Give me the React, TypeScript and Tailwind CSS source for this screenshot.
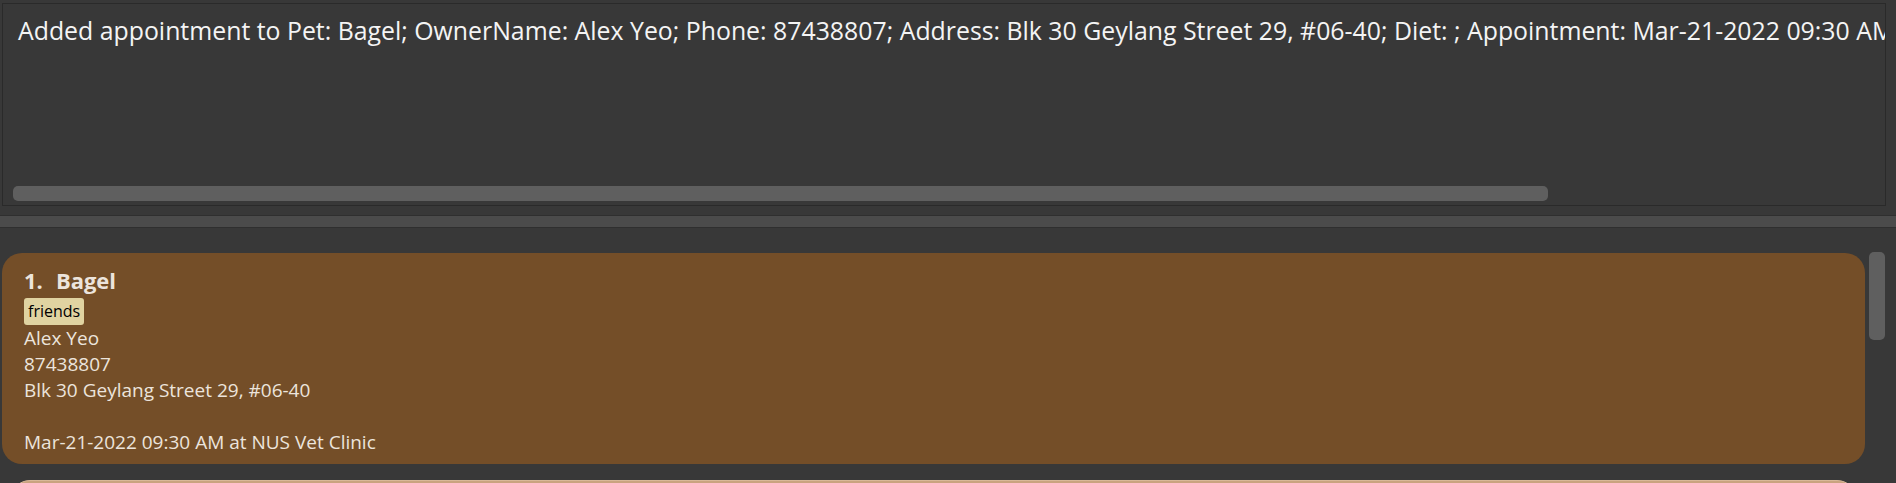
const message =
  'Added appointment to Pet: Bagel; OwnerName: Alex Yeo; Phone: 87438807; Address: Blk 30 Geylang Street 29, #06-40; Diet: ; Appointment: Mar-21-2022 09:30 AM at NUS Vet Clinic';

const pet = {
  index: 1,
  name: 'Bagel',
  tags: ['friends'],
  owner: 'Alex Yeo',
  phone: '87438807',
  address: 'Blk 30 Geylang Street 29, #06-40',
  diet: '',
  appointment: 'Mar-21-2022 09:30 AM at NUS Vet Clinic',
};

const ResultDisplay = () => (
  <div className="pl-[2px] pr-[10px] pt-[3px]">
    <div className="h-[203px] border border-[#2a2a2a] bg-[#383838] flex flex-col">
      <div className="flex-1 overflow-hidden">
        <p className="whitespace-nowrap pl-[15px] pt-[10px] text-[24.85px] leading-[32px] text-[#f4f4f4]">
          {message}
        </p>
      </div>
      <div className="h-[15px] mb-[4px] ml-[10px] w-[1535px] rounded-[5px] bg-[#5f5f5f]" />
    </div>
  </div>
);

const PetCard = () => (
  <div className="h-[211px] rounded-[20px] bg-[#744e28] pl-[22px] pt-[12px] text-[#ece4dc]">
    <div className="flex gap-[13px] text-[22px] font-bold leading-[30px]">
      <span>{pet.index}.</span>
      <span>{pet.name}</span>
    </div>
    <div className="mt-[3px] flex gap-2">
      {pet.tags.map((t) => (
        <span key={t} className="h-[27px] rounded-[3px] bg-[#e0d3a1] px-[4px] text-[16px] leading-[27px] text-black">
          {t}
        </span>
      ))}
    </div>
    <div className="text-[19px] leading-[26px]">
      <div>{pet.owner}</div>
      <div>{pet.phone}</div>
      <div>{pet.address}</div>
      <div className="h-[26px]">{pet.diet}</div>
      <div>{pet.appointment}</div>
    </div>
  </div>
);

export default function App() {
  return (
    <div
      className="w-[1896px] h-[483px] overflow-hidden bg-[#383838]"
      style={{ fontFamily: '"Open Sans", "Noto Sans", sans-serif' }}
    >
      <ResultDisplay />
      <div className="mt-[9px] h-[13px] border-y border-[#2f2f2f] bg-[#4b4b4b]" />
      <div className="flex pt-[25px] pl-[2px] pr-[11px] gap-[4px]">
        <div className="flex-1 flex flex-col gap-[16px]">
          <PetCard />
          <div className="mx-[8px] h-[60px] rounded-[20px] border border-[#d8b898] bg-[#c9a37f]" />
        </div>
        <div className="w-[16px] h-[88px] -mt-[1px] rounded-[5px] bg-[#5f5f5f]" />
      </div>
    </div>
  );
}
